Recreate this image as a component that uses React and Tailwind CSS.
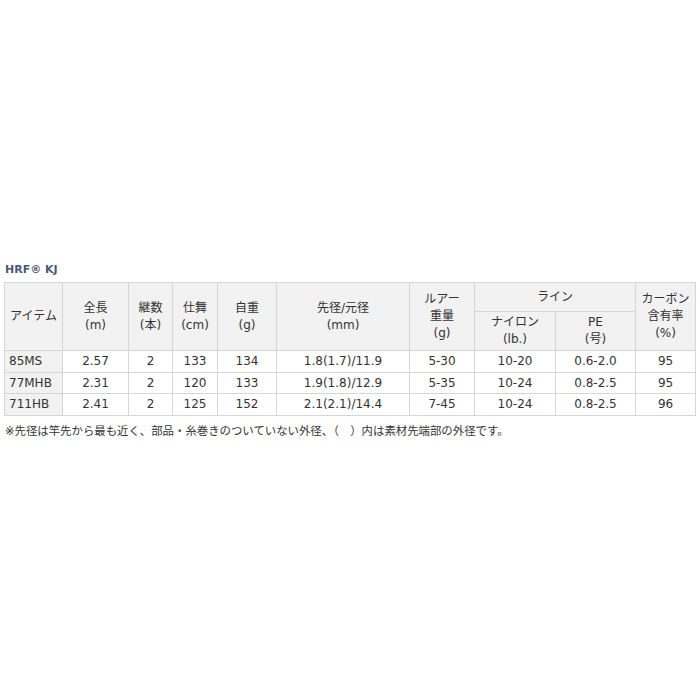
const rows = [
  ['85MS', '2.57', '2', '133', '134', '1.8(1.7)/11.9', '5-30', '10-20', '0.6-2.0', '95'],
  ['77MHB', '2.31', '2', '120', '133', '1.9(1.8)/12.9', '5-35', '10-24', '0.8-2.5', '95'],
  ['711HB', '2.41', '2', '125', '152', '2.1(2.1)/14.4', '7-45', '10-24', '0.8-2.5', '96'],
];

const th = 'border border-[#d6d6d6] bg-[#f2f2f2] font-normal text-center align-middle leading-[17px]';
const td = 'border border-[#d6d6d6] text-center align-middle';

export default function App() {
  return (
    <div
      className="w-[700px] h-[700px] bg-white text-[#333] text-[12px] pt-[262px] px-1"
      style={{ fontFamily: '"DejaVu Sans", "Noto Sans CJK JP", sans-serif' }}
    >
      <h2 className="text-[11px] font-bold text-[#4b5878] leading-4 pl-px mb-[4px]">HRF® KJ</h2>
      <table className="table-fixed border-collapse w-[691px]">
        <colgroup>
          <col className="w-[58px]" />
          <col className="w-[66px]" />
          <col className="w-[44px]" />
          <col className="w-[45px]" />
          <col className="w-[59px]" />
          <col className="w-[133px]" />
          <col className="w-[65px]" />
          <col className="w-[81px]" />
          <col className="w-[80px]" />
          <col className="w-[60px]" />
        </colgroup>
        <thead>
          <tr className="h-[29px]">
            <th rowSpan={2} className={th}>アイテム</th>
            <th rowSpan={2} className={th}>全長<br />(m)</th>
            <th rowSpan={2} className={th}>継数<br />(本)</th>
            <th rowSpan={2} className={th}>仕舞<br />(cm)</th>
            <th rowSpan={2} className={th}>自重<br />(g)</th>
            <th rowSpan={2} className={th}>先径/元径<br />(mm)</th>
            <th rowSpan={2} className={th}>ルアー<br />重量<br />(g)</th>
            <th colSpan={2} className={th}>ライン</th>
            <th rowSpan={2} className={th}>カーボン<br />含有率<br />(%)</th>
          </tr>
          <tr className="h-[39px]">
            <th className={th}>ナイロン<br />(lb.)</th>
            <th className={th}>PE<br />(号)</th>
          </tr>
        </thead>
        <tbody>
          {rows.map((r) => (
            <tr key={r[0]} className="h-[21.6px]">
              {r.map((c, i) => (
                <td key={i} className={i === 0 ? `${td} bg-[#f2f2f2] text-left pl-[4px]` : td}>
                  {c}
                </td>
              ))}
            </tr>
          ))}
        </tbody>
      </table>
      <p className="mt-[7px] pl-px leading-4 text-[11.4px]">
        ※先径は竿先から最も近く、部品・糸巻きのついていない外径、（　）内は素材先端部の外径です。
      </p>
    </div>
  );
}
